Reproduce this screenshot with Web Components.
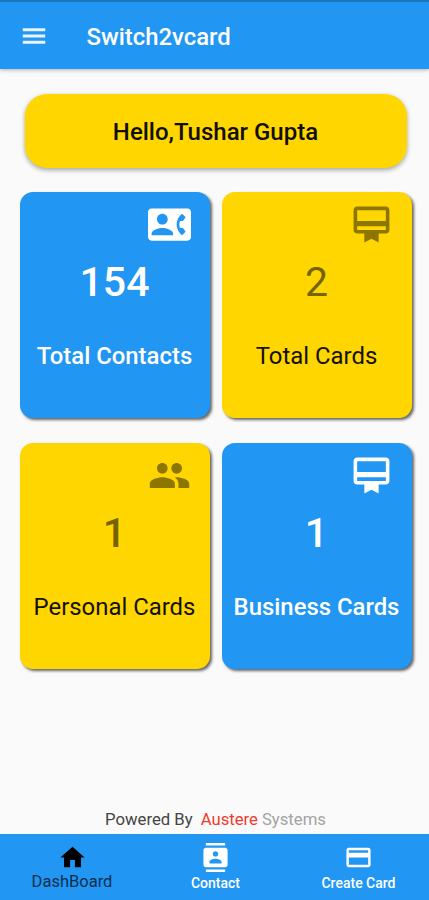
<!DOCTYPE html>
<html lang="en">
  <head>
    <meta charset="UTF-8" />
    <meta name="viewport" content="width=device-width, initial-scale=1.0" />
    <title>Switch2vcard</title>
    <style>
      body {
        margin: 0;
        font-family: Roboto, "Liberation Sans", sans-serif;
        background: #fafafa;
      }
    </style>
  </head>
  <body>
    <dashboard-page></dashboard-page>

    <script>
      // Icon shapes on a 24x24 grid
      const ICONS = {
        menu: "M3 18.2h18v-2.4H3v2.4zm0-5h18v-2.4H3v2.4zm0-7.4v2.4h18V5.8H3z",
        contactPhone:
          "M22 3H2C.9 3 0 3.9 0 5v14c0 1.1.9 2 2 2h20c1.1 0 1.99-.9 1.99-2L24 5c0-1.1-.9-2-2-2zM8 6c1.66 0 3 1.34 3 3s-1.34 3-3 3-3-1.34-3-3 1.34-3 3-3zm6 12H2v-1c0-2 4-3.1 6-3.1s6 1.1 6 3.1v1zm3.85-4h1.64L21 16l-1.99 1.99c-1.31-.98-2.28-2.38-2.73-3.99-.18-.64-.28-1.31-.28-2s.1-1.36.28-2c.45-1.62 1.42-3.01 2.73-3.99L21 8l-1.51 2h-1.64c-.22.63-.35 1.3-.35 2s.13 1.37.35 2z",
        membership:
          "M20 2H4c-1.11 0-2 .89-2 2v11c0 1.11.89 2 2 2h4v5l4-2 4 2v-5h4c1.11 0 2-.89 2-2V4c0-1.11-.89-2-2-2zm0 13H4v-2h16v2zm0-5H4V4h16v6z",
        people:
          "M16 11c1.66 0 2.99-1.34 2.99-3S17.66 5 16 5c-1.66 0-3 1.34-3 3s1.34 3 3 3zm-8 0c1.66 0 2.99-1.34 2.99-3S9.66 5 8 5C6.34 5 5 6.34 5 8s1.34 3 3 3zm0 2c-2.33 0-7 1.17-7 3.5V19h14v-2.5c0-2.33-4.67-3.5-7-3.5zm8 0c-.29 0-.62.02-.97.05 1.16.84 1.97 1.97 1.97 3.45V19h6v-2.5c0-2.33-4.67-3.5-7-3.5z",
        home: "M10 20v-6h4v6h5v-8h3L12 3 2 12h3v8z",
        contacts:
          "M20 0H4v2h16V0zM4 24h16v-2H4v2zM20 4H4c-1.1 0-2 .9-2 2v12c0 1.1.9 2 2 2h16c1.1 0 2-.9 2-2V6c0-1.1-.9-2-2-2zm-8 2.75c1.24 0 2.25 1.01 2.25 2.25s-1.01 2.25-2.25 2.25S9.75 10.24 9.75 9 10.76 6.75 12 6.75zM17 17H7v-1.5c0-1.67 3.33-2.5 5-2.5s5 .83 5 2.5V17z",
        card: "M20 4H4c-1.11 0-1.99.89-1.99 2L2 18c0 1.11.89 2 2 2h16c1.11 0 2-.89 2-2V6c0-1.11-.89-2-2-2zm0 14H4v-6h16v6zm0-10H4V6h16v2z",
      };

      class MdIcon extends HTMLElement {
        connectedCallback() {
          this.attachShadow({ mode: "open" }).innerHTML = `
            <style>
              :host { display: block; width: var(--size, 24px); height: var(--size, 24px); }
              svg { display: block; width: 100%; height: 100%; fill: currentColor; }
            </style>
            <svg viewBox="0 0 24 24"><path d="${ICONS[this.getAttribute("name")]}"/></svg>
          `;
        }
      }

      class AppBar extends HTMLElement {
        connectedCallback() {
          this.attachShadow({ mode: "open" }).innerHTML = `
            <style>
              :host {
                display: flex;
                align-items: center;
                gap: 37.5px;
                box-sizing: border-box;
                height: 69px;
                padding: 2px 19px 0;
                border-top: 2px solid #1b76bd;
                background: #2196f3;
                color: #fff;
                box-shadow: 0 1px 4px rgba(0, 0, 0, 0.3);
              }
              md-icon { --size: 30px; margin-bottom: 2px; opacity: 0.9; }
              span { font-size: 23.9px; font-weight: 500; line-height: 30px; }
            </style>
            <md-icon name="menu"></md-icon>
            <span><slot></slot></span>
          `;
        }
      }

      class HelloBanner extends HTMLElement {
        connectedCallback() {
          this.attachShadow({ mode: "open" }).innerHTML = `
            <style>
              :host {
                display: flex;
                align-items: center;
                justify-content: center;
                box-sizing: border-box;
                height: 74.5px;
                margin: 24.5px 22.5px 0 24.5px;
                padding-top: 2px;
                border-radius: 22px;
                background: #ffd600;
                color: #111000;
                font-size: 24px;
                font-weight: 500;
                box-shadow: 0 2px 5px rgba(0, 0, 0, 0.35);
              }
            </style>
            <slot></slot>
          `;
        }
      }

      class StatCard extends HTMLElement {
        connectedCallback() {
          this.attachShadow({ mode: "open" }).innerHTML = `
            <style>
              :host {
                display: flex;
                flex-direction: column;
                align-items: center;
                box-sizing: border-box;
                height: 226.5px;
                padding-top: 11.5px;
                border-radius: 13px;
                background: #ffd600;
                color: #141100;
                box-shadow: 2px 2px 3px rgba(0, 0, 0, 0.6);
                white-space: nowrap;
              }
              :host([blue]) { background: #2196f3; color: #fff; }
              md-icon { --size: 43px; align-self: flex-end; margin-right: 19px; color: #8c7600; }
              .value { margin: 12px 1px 0 0; font-size: 41px; line-height: 48px; color: #756300; }
              .label { margin: 35.5px 1px 0 0; font-size: 23.9px; line-height: 28px; }
              :host([bold]) .value { font-weight: 500; }
              :host([blue]) md-icon { color: #fff; }
              :host([blue]) .value { color: #fff; font-weight: 500; }
              :host([blue]) .label { font-weight: 500; }
            </style>
            <md-icon name="${this.getAttribute("icon")}"></md-icon>
            <div class="value">${this.getAttribute("value")}</div>
            <div class="label"><slot></slot></div>
          `;
        }
      }

      class PoweredBy extends HTMLElement {
        connectedCallback() {
          this.attachShadow({ mode: "open" }).innerHTML = `
            <style>
              :host {
                display: flex;
                justify-content: center;
                margin-top: auto;
                padding: 0 0 4px 2px;
                font-size: 16.7px;
                line-height: 20px;
                color: #444;
              }
              .first { margin: 0 4px 0 8px; color: #f03a30; }
              .second { color: #a3a3a3; }
            </style>
            <span>Powered By</span>
            <span class="first">Austere</span>
            <span class="second">Systems</span>
          `;
        }
      }

      class NavItem extends HTMLElement {
        connectedCallback() {
          this.attachShadow({ mode: "open" }).innerHTML = `
            <style>
              :host {
                display: flex;
                flex: 1;
                flex-direction: column;
                align-items: center;
                padding-top: 9px;
                color: #fff;
                font-size: 14px;
                font-weight: 500;
                line-height: 20px;
              }
              :host([active]) { color: #000; font-size: 16.5px; font-weight: 400; }
              :host([active]) span { margin: -1px 1px 0 0; color: #0a2f4d; }
              md-icon { --size: 29px; margin-bottom: 1px; }
            </style>
            <md-icon name="${this.getAttribute("icon")}"></md-icon>
            <span><slot></slot></span>
          `;
        }
      }

      class BottomNav extends HTMLElement {
        connectedCallback() {
          this.attachShadow({ mode: "open" }).innerHTML = `
            <style>
              :host { display: flex; height: 66px; padding-left: 1px; margin-right: -1px; background: #2196f3; }
            </style>
            <slot></slot>
          `;
        }
      }

      class DashboardPage extends HTMLElement {
        connectedCallback() {
          this.attachShadow({ mode: "open" }).innerHTML = `
            <style>
              :host { display: flex; flex-direction: column; height: 900px; overflow: hidden; }
              .grid {
                display: grid;
                grid-template-columns: 1fr 1fr;
                gap: 24.5px 12px;
                padding: 23.5px 17px 0 20px;
              }
            </style>
            <app-bar>Switch2vcard</app-bar>
            <hello-banner>Hello,Tushar Gupta</hello-banner>
            <div class="grid">
              <stat-card blue icon="contactPhone" value="154">Total Contacts</stat-card>
              <stat-card icon="membership" value="2">Total Cards</stat-card>
              <stat-card bold icon="people" value="1">Personal Cards</stat-card>
              <stat-card blue icon="membership" value="1">Business Cards</stat-card>
            </div>
            <powered-by></powered-by>
            <bottom-nav>
              <nav-item active icon="home">DashBoard</nav-item>
              <nav-item icon="contacts">Contact</nav-item>
              <nav-item icon="card">Create Card</nav-item>
            </bottom-nav>
          `;
        }
      }

      customElements.define("md-icon", MdIcon);
      customElements.define("app-bar", AppBar);
      customElements.define("hello-banner", HelloBanner);
      customElements.define("stat-card", StatCard);
      customElements.define("powered-by", PoweredBy);
      customElements.define("nav-item", NavItem);
      customElements.define("bottom-nav", BottomNav);
      customElements.define("dashboard-page", DashboardPage);
    </script>
  </body>
</html>
